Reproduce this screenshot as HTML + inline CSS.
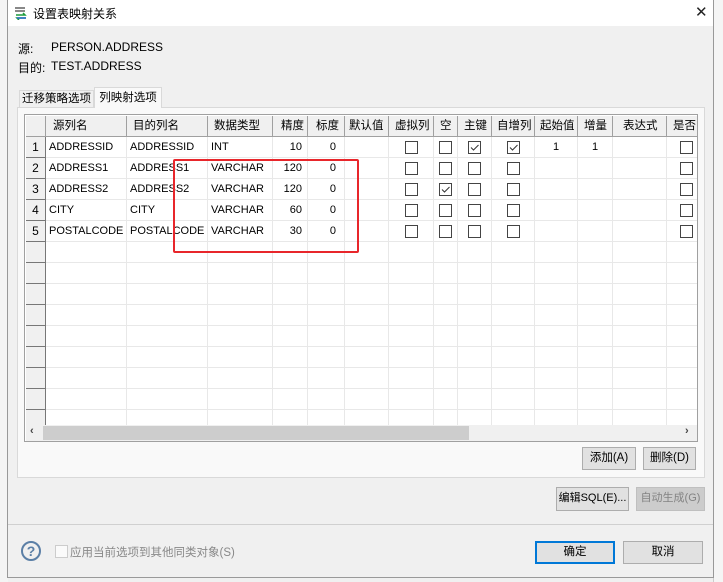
<!DOCTYPE html>
<html><head><meta charset="utf-8"><style>
*{box-sizing:border-box;margin:0;padding:0}
body{width:723px;height:582px;overflow:hidden;background:#f0f0f0;font-family:"Liberation Sans","Microsoft YaHei","Noto Sans CJK SC",sans-serif;font-size:12px;color:#000;position:relative}
.a{position:absolute;white-space:nowrap}
.btn{position:absolute;background:#e1e1e1;border:1px solid #adadad;text-align:center;font-size:11.5px;line-height:21px;white-space:nowrap;overflow:hidden}
.cell{position:absolute;border-right:1px solid #e8e8e8;border-bottom:1px solid #e8e8e8;height:21px;line-height:20px;padding:0 3px;white-space:nowrap;overflow:hidden;font-size:11px}
.hd{position:absolute;top:0;height:21px;line-height:20px;background:#f0f0f0;border-right:1px solid #a0a0a0;border-bottom:1px solid #a0a0a0;padding-left:6px;white-space:nowrap;overflow:hidden;font-size:11.5px}
.cb{position:absolute;width:13px;height:13px;border:1px solid #444;background:#fff}
.rn{position:absolute;left:0;width:20px;height:21px;background:#f0f0f0;border-right:1px solid #777;border-bottom:1px solid #777;text-align:center;line-height:20px}
</style></head><body>
<div class="a" style="left:0;top:0;width:8px;height:582px;background:#f4f4f4"></div>
<div class="a" style="left:713px;top:0;width:10px;height:582px;background:#f5f5f5;border-left:1px solid #ccc"></div>
<div class="a" style="left:7px;top:0;width:707px;height:578px;background:#f0f0f0;border:1px solid #999;border-top:none"></div>
<div class="a" style="left:8px;top:0;width:705px;height:26px;background:#fff"></div>
<svg class="a" style="left:14px;top:6px" width="14" height="14"><rect x="1" y="1" width="10" height="2" fill="#888"/><rect x="1" y="4" width="10" height="2" fill="#888"/><path d="M2 9h9l-2-2M12 12H3l2 2" stroke="#1a9a3a" stroke-width="1.5" fill="none"/><path d="M3 12h9" stroke="#2a6ad0" stroke-width="1.5"/></svg>
<div class="a" style="left:33px;top:5px;font-size:12px">设置表映射关系</div>
<div class="a" style="left:695px;top:3px;font-size:15px;color:#222">✕</div>
<div class="a" style="left:18px;top:40px">源:</div>
<div class="a" style="left:51px;top:40px">PERSON.ADDRESS</div>
<div class="a" style="left:18px;top:59px">目的:</div>
<div class="a" style="left:51px;top:59px">TEST.ADDRESS</div>
<div class="a" style="left:19px;top:90px;width:75px;height:18px;border:1px solid #d9d9d9;border-bottom:none;line-height:17px;text-align:center;background:#f0f0f0;font-size:11.5px">迁移策略选项</div>
<div class="a" style="left:17px;top:107px;width:688px;height:371px;border:1px solid #d9d9d9;background:#f9f9f9"></div>
<div class="a" style="left:94px;top:87px;width:68px;height:21px;border:1px solid #d9d9d9;border-bottom:none;background:#f9f9f9;line-height:20px;text-align:center;font-size:11.5px">列映射选项</div>
<div class="a" style="left:24px;top:114px;width:674px;height:328px;border:1px solid #a0a0a0;background:#fff;overflow:hidden">
 <div class="a" style="left:1px;top:1px;width:680px;height:310px">
  <div class="hd" style="left:0;width:20px;padding:0"></div>
  <div class="hd" style="left:20px;width:81px;padding-left:7px">源列名</div>
  <div class="hd" style="left:101px;width:81px">目的列名</div>
  <div class="hd" style="left:182px;width:65px">数据类型</div>
  <div class="hd" style="left:247px;width:35px;padding-left:8px">精度</div>
  <div class="hd" style="left:282px;width:37px;padding-left:8px">标度</div>
  <div class="hd" style="left:319px;width:44px;padding-left:4px">默认值</div>
  <div class="hd" style="left:363px;width:45px;padding-left:6px">虚拟列</div>
  <div class="hd" style="left:408px;width:24px;padding-left:6px">空</div>
  <div class="hd" style="left:432px;width:34px;padding-left:6px">主键</div>
  <div class="hd" style="left:466px;width:43px;padding-left:5px">自增列</div>
  <div class="hd" style="left:509px;width:43px;padding-left:5px">起始值</div>
  <div class="hd" style="left:552px;width:35px;padding-left:6px">增量</div>
  <div class="hd" style="left:587px;width:54px;padding-left:10px">表达式</div>
  <div class="hd" style="left:641px;width:40px;padding-left:6px">是否</div>
  <div id="rows"></div>
 </div>
 <div class="a" style="left:1px;top:310px;width:672px;height:16px;background:#f0f0f0"></div>
 <div class="a" style="left:18px;top:311px;width:426px;height:14px;background:#cdcdcd"></div>
 <div class="a" style="left:5px;top:310px;font-size:11px;font-weight:bold;color:#444">‹</div>
 <div class="a" style="left:660px;top:310px;font-size:11px;font-weight:bold;color:#444">›</div>
</div>
<div class="a" style="left:173px;top:159px;width:186px;height:94px;border:2px solid #e8262b;border-radius:2px"></div>
<div class="btn" style="left:582px;top:447px;width:54px;height:23px">添加(A)</div>
<div class="btn" style="left:643px;top:447px;width:53px;height:23px">删除(D)</div>
<div class="btn" style="left:556px;top:487px;width:73px;height:24px;font-size:11px">编辑SQL(E)...</div>
<div class="btn" style="left:636px;top:487px;width:69px;height:24px;background:#cccccc;border-color:#bfbfbf;color:#838383;font-size:11px">自动生成(G)</div>
<div class="a" style="left:8px;top:524px;width:705px;height:1px;background:#d0d0d0"></div>
<div class="a" style="left:21px;top:541px;width:20px;height:20px;border:2px solid #5b7fa6;border-radius:50%;text-align:center;line-height:16px;font-size:14px;color:#5b7fa6;font-weight:bold">?</div>
<div class="a" style="left:55px;top:545px;width:13px;height:13px;border:1px solid #ccc;background:#fafafa"></div>
<div class="a" style="left:70px;top:544px;color:#888;font-size:11.5px">应用当前选项到其他同类对象(S)</div>
<div class="btn" style="left:535px;top:541px;width:80px;height:23px;border:1px solid #0078d7;box-shadow:inset 0 0 0 1px #0078d7">确定</div>
<div class="btn" style="left:623px;top:541px;width:80px;height:23px">取消</div>
<script>
// src,dst,type,prec,scale,virtual,null,pk,auto,start,inc
var data=[["ADDRESSID","ADDRESSID","INT","10","0",0,0,1,1,"1","1"],
["ADDRESS1","ADDRESS1","VARCHAR","120","0",0,0,0,0,"",""],
["ADDRESS2","ADDRESS2","VARCHAR","120","0",0,1,0,0,"",""],
["CITY","CITY","VARCHAR","60","0",0,0,0,0,"",""],
["POSTALCODE","POSTALCODE","VARCHAR","30","0",0,0,0,0,"",""]];
var cols=[[20,81],[101,81],[182,65],[247,35],[282,37],[319,44],[363,45],[408,24],[432,34],[466,43],[509,43],[552,35],[587,54],[641,40]];
var h="";
function cb(w,chk){return '<span class="cb" style="left:'+((w-13)/2|0)+'px;top:4px">'+(chk?'<svg width="11" height="11" style="position:absolute;left:0;top:0"><path d="M2 5.5l2.5 2.5 5-5" stroke="#333" fill="none"/></svg>':'')+'</span>';}
for(var r=0;r<14;r++){var y=21+r*21;var d=data[r];
h+='<div class="rn" style="top:'+y+'px">'+(d?r+1:"")+'</div>';
for(var c=0;c<cols.length;c++){var s="",al="";
if(d){if(c<3)s=d[c];else if(c==3||c==4){s=d[c];al="text-align:right;padding-right:"+(c==3?"5":"8")+"px;";}
else if(c>=6&&c<=9){s=cb(cols[c][1],d[c-1]);}
else if(c==10||c==11){s=d[c-1];al="text-align:center;";}
else if(c==13){s='<span class="cb" style="left:13px;top:4px"></span>';}}
h+='<div class="cell" style="left:'+cols[c][0]+'px;top:'+y+'px;width:'+cols[c][1]+'px;'+al+'">'+s+'</div>';}}
document.getElementById("rows").innerHTML=h;
</script>
</body></html>
